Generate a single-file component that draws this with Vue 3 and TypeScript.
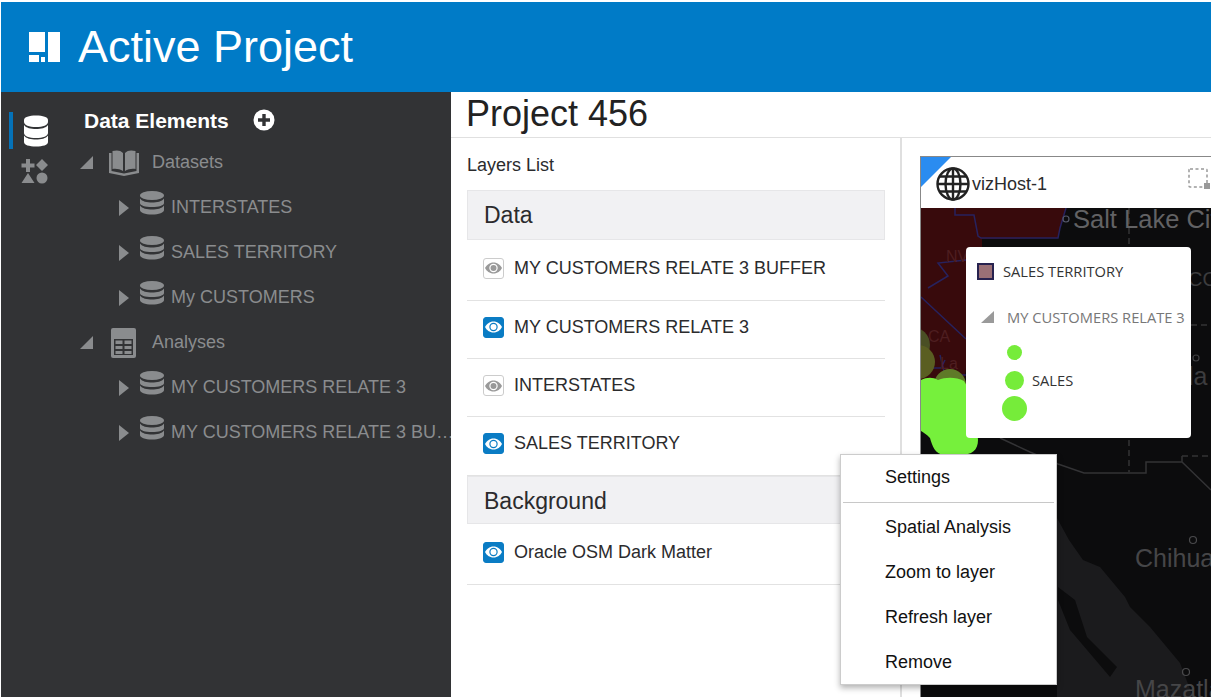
<template>
  <div class="app">
    <header class="topbar">
      <svg class="logo" width="31" height="30" viewBox="0 0 31 30">
        <path fill="#fff" d="M0 0h16v20H0zM0 23h10v7H0zM12 25h4v5h-4zM19 0h12v30H19z" />
      </svg>
      <span class="app-title">Active Project</span>
    </header>

    <div class="content">
      <aside class="sidebar">
        <div class="rail">
          <div class="rail-item active">
            <svg width="26" height="32" viewBox="0 0 26 32">
              <path fill="#fff" d="M1 5C1 2 6 .5 13 .5S25 2 25 5v2c0 3-5 5-12 5S1 10 1 7z" />
              <path fill="#fff" d="M1 10c2 3 7 4 12 4s10-1 12-4v8c0 3-5 5-12 5S1 21 1 18z" />
              <path fill="#fff" d="M1 20.500c2 3 7 4 12 4s10-1 12-4V27c0 3-5 4.500-12 4.500S1 30 1 27z" />
            </svg>
          </div>
          <svg class="rail-shapes" width="28" height="26" viewBox="0 0 28 26">
            <path fill="#8a8c8e" d="M5 1h4v4.500h4.500v4H9V14H5V9.500H.5v-4H5zM21 1l6 6-6 6-6-6zM7 15l6.500 10H.500z" />
            <circle cx="21" cy="20" r="5.500" fill="#8a8c8e" />
          </svg>
        </div>

        <div class="tree">
          <div class="tree-head">
            <span>Data Elements</span>
            <svg width="22" height="22" viewBox="0 0 22 22">
              <circle cx="11" cy="11" r="10.500" fill="#fff" />
              <path fill="#323335" d="M9.300 5h3.400v4.300H17v3.400h-4.300V17H9.300v-4.300H5V9.300h4.300z" />
            </svg>
          </div>

          <template v-for="group in tree" :key="group.name">
            <div class="tree-group">
              <svg class="open-caret" width="14" height="13" viewBox="0 0 14 13"><path fill="#8a8c8e" d="M13 0v13H0z" /></svg>
              <svg v-if="group.icon === 'book'" class="group-icon" width="30" height="26" viewBox="0 0 30 26">
                <path fill="#8a8c8e" d="M0 3h2.500v18l12.500 2.500L27.500 21V3H30v20l-15 3-15-3z" />
                <path fill="#8a8c8e" d="M3.500 1c4-1 8-1 10.500 2v18c-3-2-7-2.500-10.500-2zM26.500 1c-4-1-8-1-10.500 2v18c3-2 7-2.500 10.500-2z" />
              </svg>
              <svg v-else class="group-icon table-icon" width="25" height="30" viewBox="0 0 25 30">
                <rect width="25" height="30" rx="2" fill="#8a8c8e" />
                <rect x="3" y="11" width="19" height="16" fill="#323335" />
                <path fill="#8a8c8e" d="M4.500 12.500h7v3.500h-7zM13.500 12.500h7v3.500h-7zM4.500 18h7v3h-7zM13.500 18h7v3h-7zM4.500 23h7v3h-7zM13.500 23h7v3h-7z" />
              </svg>
              <span>{{ group.name }}</span>
            </div>
            <div v-for="leaf in group.leaves" :key="leaf" class="tree-leaf">
              <svg class="leaf-caret" width="10" height="16" viewBox="0 0 10 16"><path fill="#8a8c8e" d="M0 0l10 8-10 8z" /></svg>
              <svg class="leaf-db" width="24" height="24" viewBox="0 0 24 24">
                <ellipse cx="12" cy="4.500" rx="12" ry="4.500" fill="#8a8c8e" />
                <path fill="#8a8c8e" d="M0 7.500c2 3 7 4 12 4s10-1 12-4V12c0 2.500-5 4-12 4S0 14.500 0 12z" />
                <path fill="#8a8c8e" d="M0 14.500c2 3 7 4 12 4s10-1 12-4V19c0 2.500-5 4.500-12 4.500S0 21.500 0 19z" />
              </svg>
              <span class="leaf-name">{{ leaf }}</span>
            </div>
          </template>
        </div>
      </aside>

      <main class="main">
        <h1 class="project-title">Project 456</h1>
        <div class="workspace">
          <section class="layers">
            <div class="layers-title">Layers List</div>
            <template v-for="section in sections" :key="section.name">
              <div class="section-head">{{ section.name }}</div>
              <div v-for="layer in section.layers" :key="layer.name" class="layer-row">
                <span class="eye" :class="{ on: layer.visible }">
                  <svg width="17" height="12" viewBox="0 0 17 12">
                    <path fill="currentColor" d="M8.500 .5C12.500 .5 15.500 3 17 6 15.500 9 12.500 11.500 8.500 11.500S1.500 9 0 6C1.500 3 4.500 .5 8.500 .5z" />
                    <circle class="eye-ring" cx="8.500" cy="6" r="3.600" fill="none" stroke-width="1.200" />
                  </svg>
                </span>
                <span class="layer-name">{{ layer.name }}</span>
              </div>
            </template>
          </section>

          <section class="map-pane">
            <div class="map-card">
              <div class="card-corner"></div>
              <div class="card-bar">
                <svg class="globe" width="34" height="34" viewBox="0 0 34 34" fill="none" stroke="#222" stroke-width="2.400">
                  <circle cx="17" cy="17" r="15.500" />
                  <ellipse cx="17" cy="17" rx="7.500" ry="15.500" />
                  <path d="M17 1.500v31M1.500 17h31M4 9.500h26M4 24.500h26" />
                </svg>
                <span>vizHost-1</span>
                <svg class="select-icon" width="23" height="22" viewBox="0 0 23 22">
                  <rect x="1" y="1" width="18" height="18" rx="1" fill="none" stroke="#999" stroke-width="1.500" stroke-dasharray="3 2.500" />
                  <rect x="16" y="15" width="6" height="6" fill="#999" />
                </svg>
              </div>

              <div class="map">
                <svg class="map-art" width="291" height="489" viewBox="920 208 291 489">
                  <rect x="920" y="208" width="291" height="489" fill="#0c0c0d" />
                  <path fill="#1b1b1d" d="M1057 518l12 22 14 20 17 7 25 30 5 10 20 20 30 36 13 34h-136z" />
                  <path fill="#0c0c0d" d="M1058 587l17 13 12 37 30 30-7 10-17-20-23-27-12-30z" />
                  <path fill="#380a0c" d="M920 208h146l-6 20-2 10h-38v1h-38v9l-20 150-40 30-20 20h-20z" />
                  <g fill="none" stroke="#27225e" stroke-width="1.500">
                    <path d="M955 208v7h19l4 21 3 2h77l2-10 6-20" />
                    <path d="M921 297l45 42M928 288l20-12-10-13 28-3M921 368h20l4-8M940 355l6 25" />
                    <path d="M950 375h25" />
                  </g>
                  <circle cx="1066" cy="219" r="3" fill="none" stroke="#55586a" stroke-width="1.200" />
                  <circle cx="1196" cy="358" r="3" fill="none" stroke="#3f3f41" stroke-width="1.200" />
                  <circle cx="1193" cy="540" r="3.500" fill="none" stroke="#4a4a4c" stroke-width="1.200" />
                  <circle cx="1186" cy="672" r="3.500" fill="none" stroke="#4a4a4c" stroke-width="1.200" />
                  <g fill="none" stroke="#333335" stroke-width="1.500">
                    <path d="M1129 208v42M1129 430v42M1191 325h20M1182 456h29" stroke-dasharray="6 4" />
                    <path d="M1000 438l30 14 28 12 26 9h62v-11h36l29 28M1182 456v6" />
                  </g>
                  <g fill="#464648" font-family="Liberation Sans, sans-serif" font-size="25">
                    <text x="1073" y="228" fill="#626264" font-size="25.500">Salt Lake City</text>
                    <text x="1135" y="567">Chihuahua</text>
                    <text x="1135" y="698">Mazatlan</text>
                    <text x="1188" y="286" fill="#3c3c3e" font-size="20">CO</text>
                    <text x="1188" y="385" fill="#3c3c3e">la</text>
                  </g>
                  <g fill="#4e1e20" font-family="Liberation Sans, sans-serif" font-size="16">
                    <text x="946" y="262">NV</text>
                    <text x="928" y="342">CA</text>
                    <text x="940" y="369">La</text>
                  </g>
                  <circle cx="912" cy="345" r="18" fill="#4a4f25" />
                  <circle cx="918" cy="362" r="17" fill="#5a5e22" />
                  <circle cx="950" cy="385" r="16" fill="#5f7a28" />
                  <path fill="#76f03c" d="M921 380c6-3 12-3 17 0 8-3 18-3 26 1l11 19 3 40c0 10-6 15-18 15h-15c-10 0-13-10-15-17-4-4-7-6-9-7z" />
                </svg>

                <div class="legend">
                  <div class="legend-row">
                    <span class="swatch"></span>
                    <span>SALES TERRITORY</span>
                  </div>
                  <div class="legend-group">
                    <svg width="13" height="12" viewBox="0 0 13 12"><path fill="#9a9a9a" d="M13 0v12H0z" /></svg>
                    <span>MY CUSTOMERS RELATE 3</span>
                  </div>
                  <div class="legend-sizes">
                    <div v-for="dot in dots" :key="dot.size" class="dot-row">
                      <span class="dot-cell"><span class="dot" :style="{ width: dot.size + 'px', height: dot.size + 'px' }"></span></span>
                      <span>{{ dot.label }}</span>
                    </div>
                  </div>
                </div>
              </div>
            </div>
          </section>
        </div>
      </main>
    </div>

    <div class="context-menu">
      <div class="menu-item">Settings</div>
      <div class="menu-divider"></div>
      <div v-for="item in menuItems" :key="item" class="menu-item">{{ item }}</div>
    </div>
  </div>
</template>

<script setup lang="ts">
const tree = [
  { name: 'Datasets', icon: 'book', leaves: ['INTERSTATES', 'SALES TERRITORY', 'My CUSTOMERS'] },
  { name: 'Analyses', icon: 'table', leaves: ['MY CUSTOMERS RELATE 3', 'MY CUSTOMERS RELATE 3 BUFFER'] },
]

const sections = [
  {
    name: 'Data',
    layers: [
      { name: 'MY CUSTOMERS RELATE 3 BUFFER', visible: false },
      { name: 'MY CUSTOMERS RELATE 3', visible: true },
      { name: 'INTERSTATES', visible: false },
      { name: 'SALES TERRITORY', visible: true },
    ],
  },
  {
    name: 'Background',
    layers: [{ name: 'Oracle OSM Dark Matter', visible: true }],
  },
]

const dots = [
  { size: 15, label: '' },
  { size: 19, label: 'SALES' },
  { size: 25, label: '' },
]

const menuItems = ['Spatial Analysis', 'Zoom to layer', 'Refresh layer', 'Remove']
</script>

<style>
html,
body {
  margin: 0;
  background: #fff;
}
</style>

<style scoped>
.app {
  position: relative;
  width: 1211px;
  height: 697px;
  padding: 2px 0 0 1px;
  box-sizing: border-box;
  overflow: hidden;
  display: flex;
  flex-direction: column;
  font-family: "Liberation Sans", Arial, sans-serif;
  color: #2b2b2d;
}

.topbar {
  height: 90px;
  flex: none;
  background: #007bc7;
  display: flex;
  align-items: center;
  padding-left: 28px;
  gap: 18px;
  color: #fff;
}

.app-title {
  font-size: 45px;
}

.content {
  flex: 1;
  display: flex;
  min-height: 0;
}

/* left side */
.sidebar {
  width: 450px;
  flex: none;
  background: #323335;
  display: flex;
  overflow: hidden;
}

.rail {
  width: 83px;
  flex: none;
  display: flex;
  flex-direction: column;
  padding: 20px 0 0 8px;
  box-sizing: border-box;
}

.rail-item {
  width: 40px;
  height: 37px;
  display: flex;
  align-items: center;
  padding-left: 10px;
  box-sizing: border-box;
  border-left: 4px solid #0572b8;
}

.rail-shapes {
  margin: 9px 0 0 12px;
}

.tree {
  flex: 1;
  min-width: 0;
  color: #8a8c8e;
  font-size: 18px;
}

.tree-head {
  height: 56px;
  display: flex;
  align-items: center;
  gap: 24px;
  color: #fff;
  font-size: 21px;
  font-weight: bold;
  padding-top: 2px;
  box-sizing: border-box;
}

.tree-head svg {
  margin-top: -2px;
}

.tree-group {
  height: 45px;
  display: flex;
  align-items: center;
  margin-top: -8px;
  margin-bottom: 8px;
}

.open-caret {
  margin: 0 15px 0 -4px;
}

.group-icon {
  margin-right: 13px;
}

.table-icon {
  margin: 0 16px 0 2px;
}

.tree-leaf {
  height: 45px;
  display: flex;
  align-items: center;
  margin-top: -8px;
  margin-bottom: 8px;
  padding-left: 35px;
}

.leaf-caret {
  flex: none;
  margin-right: 11px;
}

.leaf-db {
  flex: none;
  margin: -9px 7px 0 0;
}

.leaf-name {
  flex: 1;
  min-width: 0;
  margin-right: -9px;
  white-space: nowrap;
  overflow: hidden;
  text-overflow: ellipsis;
}

/* main area */
.main {
  flex: 1;
  min-width: 0;
  display: flex;
  flex-direction: column;
}

.project-title {
  margin: 0;
  height: 46px;
  flex: none;
  box-sizing: border-box;
  padding-left: 15px;
  font-size: 36px;
  font-weight: normal;
  line-height: 43px;
  border-bottom: 1px solid #e0e0e0;
  color: #222;
}

.workspace {
  flex: 1;
  display: flex;
  min-height: 0;
}

.layers {
  width: 451px;
  flex: none;
  box-sizing: border-box;
  padding: 0 15px 0 16px;
  border-right: 2px solid #dfdfdf;
}

.layers-title {
  height: 52px;
  line-height: 54px;
  font-size: 18px;
}

.section-head {
  height: 48.500px;
  margin-bottom: 1px;
  box-sizing: border-box;
  line-height: 48px;
  padding-left: 16px;
  background: #f1f1f3;
  border: 1px solid #e6e6e8;
  font-size: 23px;
}

.layers-title + .section-head {
  height: 50px;
  line-height: 48px;
}

.layer-row {
  height: 58.400px;
  box-sizing: border-box;
  display: flex;
  align-items: center;
  padding: 0 0 4px 16px;
  gap: 10px;
  border-bottom: 1px solid #e2e2e2;
  font-size: 18px;
}

.section-head + .layer-row {
  height: 59.500px;
}

.eye {
  width: 21px;
  height: 21px;
  box-sizing: border-box;
  flex: none;
  border-radius: 3px;
  display: flex;
  align-items: center;
  justify-content: center;
  border: 1px solid #ccc;
  background: #fff;
  color: #999;
}

.eye .eye-ring {
  stroke: #fff;
}

.eye.on {
  border-color: #0a7cc4;
  background: #0a7cc4;
  color: #fff;
}

.eye.on .eye-ring {
  stroke: #0a7cc4;
}

.map-pane {
  flex: 1;
  min-width: 0;
  padding: 18px 0 0 18px;
  display: flex;
}

.map-card {
  position: relative;
  flex: 1;
  min-width: 0;
  display: flex;
  flex-direction: column;
  border-top: 1px solid #888;
  border-left: 1px solid #888;
  overflow: hidden;
}

.card-corner {
  position: absolute;
  left: 0;
  top: 0;
  width: 30px;
  height: 30px;
  background: #2a8cf0;
  clip-path: polygon(0 0, 100% 0, 0 100%);
}

.card-bar {
  height: 51px;
  flex: none;
  display: flex;
  align-items: center;
  padding: 2px 0 0 15px;
  box-sizing: border-box;
  font-size: 18px;
  background: #fff;
}

.card-bar span {
  padding-top: 2px;
}

.globe {
  position: relative;
  margin-right: 2px;
}

.select-icon {
  margin-left: auto;
  margin-top: -9px;
}

.map {
  position: relative;
  flex: 1;
  min-height: 0;
}

.map-art {
  display: block;
  position: absolute;
  left: -1px;
  top: 0;
}

.legend {
  position: absolute;
  left: 45px;
  top: 39px;
  width: 225px;
  height: 191px;
  background: #fff;
  border-radius: 4px;
  font-family: "Open Sans", sans-serif;
  font-size: 14.700px;
  color: #333;
  box-sizing: border-box;
  padding-top: 14px;
}

.legend-row {
  display: flex;
  align-items: center;
  gap: 9px;
  padding-left: 11px;
  height: 20px;
}

.swatch {
  width: 17px;
  height: 17px;
  box-sizing: border-box;
  background: #9a7076;
  border: 2px solid #27224f;
}

.legend-group {
  display: flex;
  align-items: center;
  gap: 13px;
  padding-left: 15px;
  margin-top: 26px;
  height: 20px;
  color: #777;
  white-space: nowrap;
}

.legend-sizes {
  margin-top: 11px;
}

.dot-row {
  height: 28px;
  display: flex;
  align-items: center;
  gap: 5px;
}

.dot-cell {
  width: 61px;
  display: flex;
  justify-content: center;
  padding-left: 35px;
  box-sizing: border-box;
}

.dot {
  display: block;
  border-radius: 50%;
  background: #76ec3a;
}

/* context menu */
.context-menu {
  position: absolute;
  left: 840px;
  top: 454px;
  width: 217px;
  height: 231px;
  box-sizing: border-box;
  background: #fff;
  border: 1px solid #ccc;
  box-shadow: 0 3px 6px rgba(0, 0, 0, 0.3);
  color: #111;
  font-size: 18px;
}

.menu-item {
  height: 45px;
  line-height: 45px;
  padding-left: 44px;
}

.menu-divider {
  height: 1px;
  margin: 2px;
  background: #c8c8c8;
}
</style>
